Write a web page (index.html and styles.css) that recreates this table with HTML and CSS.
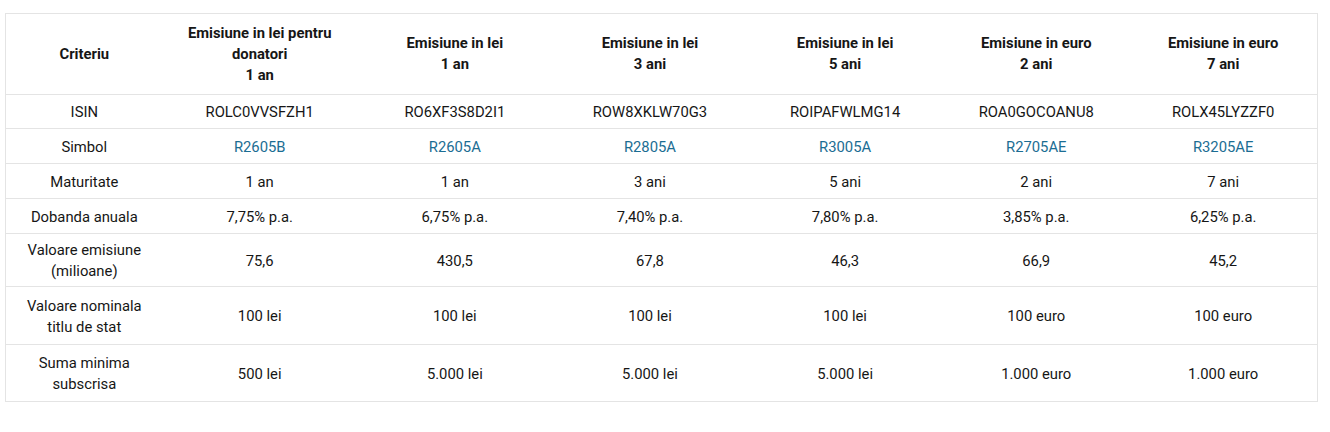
FILE: index.html
```html
<!DOCTYPE html>
<html lang="ro">
<head>
<meta charset="utf-8">
<link rel="stylesheet" href="styles.css">
</head>
<body>
<div class="wrap">
<table class="bonds">
  <colgroup>
    <col class="c0"><col class="c1"><col class="c2"><col class="c3"><col class="c4"><col class="c5"><col class="c6">
  </colgroup>
  <thead>
    <tr class="r-head">
      <th>Criteriu</th>
      <th>Emisiune in lei pentru<br>donatori<br>1 an</th>
      <th>Emisiune in lei<br>1 an</th>
      <th>Emisiune in lei<br>3 ani</th>
      <th>Emisiune in lei<br>5 ani</th>
      <th>Emisiune in euro<br>2 ani</th>
      <th>Emisiune in euro<br>7 ani</th>
    </tr>
  </thead>
  <tbody>
    <tr class="r-a">
      <td>ISIN</td><td>ROLC0VVSFZH1</td><td>RO6XF3S8D2I1</td><td>ROW8XKLW70G3</td><td>ROIPAFWLMG14</td><td>ROA0GOCOANU8</td><td>ROLX45LYZZF0</td>
    </tr>
    <tr class="r-b">
      <td>Simbol</td><td><a class="sym">R2605B</a></td><td><a class="sym">R2605A</a></td><td><a class="sym">R2805A</a></td><td><a class="sym">R3005A</a></td><td><a class="sym">R2705AE</a></td><td><a class="sym">R3205AE</a></td>
    </tr>
    <tr class="r-b">
      <td>Maturitate</td><td>1 an</td><td>1 an</td><td>3 ani</td><td>5 ani</td><td>2 ani</td><td>7 ani</td>
    </tr>
    <tr class="r-b">
      <td>Dobanda anuala</td><td>7,75% p.a.</td><td>6,75% p.a.</td><td>7,40% p.a.</td><td>7,80% p.a.</td><td>3,85% p.a.</td><td>6,25% p.a.</td>
    </tr>
    <tr class="r-c">
      <td>Valoare emisiune<br>(milioane)</td><td>75,6</td><td>430,5</td><td>67,8</td><td>46,3</td><td>66,9</td><td>45,2</td>
    </tr>
    <tr class="r-d">
      <td>Valoare nominala<br>titlu de stat</td><td>100 lei</td><td>100 lei</td><td>100 lei</td><td>100 lei</td><td>100 euro</td><td>100 euro</td>
    </tr>
    <tr class="r-e">
      <td>Suma minima<br>subscrisa</td><td>500 lei</td><td>5.000 lei</td><td>5.000 lei</td><td>5.000 lei</td><td>1.000 euro</td><td>1.000 euro</td>
    </tr>
  </tbody>
</table>
</div>
</body>
</html>
```

FILE: styles.css
```css
html, body {
  margin: 0;
  padding: 0;
  background: #ffffff;
}

.wrap {
  padding: 13px 0 0 5px;
}

.bonds {
  border-collapse: collapse;
  table-layout: fixed;
  width: 1313px;
  border: 1px solid #e4e4e4;
  font-family: Roboto, "Noto Sans", "Liberation Sans", sans-serif;
  font-size: 14.8px;
  line-height: 21px;
  color: #161616;
}

.c0 { width: 157px; }
.c1 { width: 194px; }
.c2 { width: 196px; }
.c3 { width: 194px; }
.c4 { width: 196px; }
.c5 { width: 186px; }
.c6 { width: 188px; }

.bonds th,
.bonds td {
  text-align: center;
  vertical-align: middle;
  padding: 0 4px;
  border-bottom: 1px solid #e4e4e4;
}

.bonds td {
  padding-top: 2px;
}

.bonds th {
  font-weight: 700;
}

.r-head th { height: 80px; }
.r-a td { height: 31px; }
.r-b td { height: 32px; }
.r-c td { height: 50px; }
.r-d td { height: 55px; }
.r-e td { height: 54px; }

.sym {
  color: #1b6d93;
  text-decoration: none;
}
```
